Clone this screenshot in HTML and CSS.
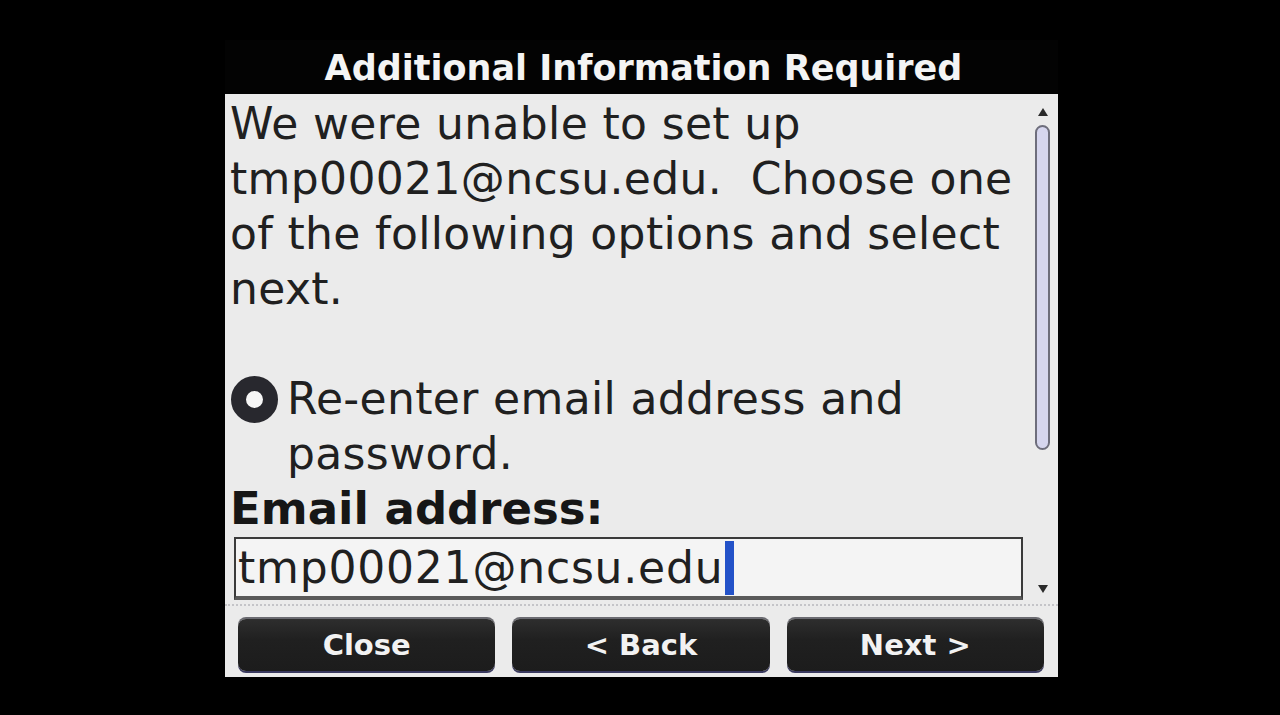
FILE: index.html
```html
<!DOCTYPE html>
<html lang="en">
<head>
  <meta charset="UTF-8">
  <title>Additional Information Required</title>
  <link rel="stylesheet" href="styles.css">
</head>
<body>

  <div class="screen">
    <header class="titlebar">Additional Information Required</header>

    <div class="panel">
      <div class="content">
        <p class="msg">We were unable to set up<br>tmp00021@ncsu.edu.&nbsp; Choose one<br>of the following options and select<br>next.</p>

        <div class="option">
          <span class="radio"></span>
          <span class="option-text">Re-enter email address and<br>password.</span>
        </div>

        <div class="field-label">Email address:</div>
        <div class="field">tmp00021@ncsu.edu<span class="caret"></span></div>
      </div>

      <!-- barra de desplazamiento -->
      <div class="scroll">
        <span class="arrow up"></span>
        <span class="thumb"></span>
        <span class="arrow down"></span>
      </div>
    </div>

    <div class="rule"></div>

    <div class="buttons">
      <button class="btn">Close</button>
      <button class="btn">&lt; Back</button>
      <button class="btn">Next &gt;</button>
    </div>
  </div>

</body>
</html>
```

FILE: styles.css
```css
* {
  margin: 0;
  padding: 0;
  box-sizing: border-box;
}

body {
  background-color: #000;
  font-family: 'DejaVu Sans', 'Liberation Sans', sans-serif;
  height: 715px;
  overflow: hidden;
}

/* Pantalla */
.screen {
  width: 833px;
  margin: 40px 0 0 225px;
  background-color: #ebebeb;
}

.titlebar {
  height: 54px;
  background-color: #030303;
  color: #f4f4f4;
  font-weight: bold;
  font-size: 35px;
  text-align: center;
  line-height: 56px;
  padding-left: 4px;
}

.panel {
  display: flex;
  height: 509px;
}

.content {
  flex: 1;
  padding: 2px 0 0 5px;
  color: #202020;
  font-size: 44px;
  letter-spacing: 0.35px;
  line-height: 55px;
}

.msg {
  margin-bottom: 55px;
}

.option {
  display: flex;
  align-items: flex-start;
}

.radio {
  flex: none;
  width: 47px;
  height: 47px;
  margin: 5px 9px 0 1px;
  border-radius: 50%;
  border: 15px solid #28282e;
  background-color: #f6f6f6;
}

.field-label {
  font-weight: bold;
  font-size: 45px;
  letter-spacing: 0;
  color: #161616;
}

.field {
  margin: 1px 0 0 4px;
  width: 789px;
  height: 63px;
  border: 2px solid #3a3a3a;
  border-bottom: 4px solid #5a5a5a;
  background-color: #f4f4f4;
  letter-spacing: 0.8px;
  line-height: 57px;
  padding-left: 2px;
  display: flex;
  align-items: center;
}

.caret {
  width: 9px;
  height: 54px;
  margin-left: 2px;
  background-color: #2352c8;
}

/* Scroll */
.scroll {
  width: 27px;
  display: flex;
  flex-direction: column;
  align-items: center;
  padding: 14px 4px 0 0;
}

.thumb {
  width: 15px;
  height: 325px;
  margin-top: 9px;
  border: 2px solid #6e6e7c;
  border-radius: 8px;
  background-color: #d6d6ee;
}

.arrow {
  width: 0;
  height: 0;
  border-left: 5px solid transparent;
  border-right: 5px solid transparent;
}

.up {
  border-bottom: 8px solid #2a2a2a;
}

.down {
  margin-top: 135px;
  border-top: 8px solid #2a2a2a;
}

.rule {
  height: 12px;
  border-top: 2px dotted #c4c4c8;
  margin-top: 1px;
}

.buttons {
  display: flex;
  gap: 17px;
  padding: 3px 14px 6px 13px;
}

.btn {
  flex: 1;
  height: 52px;
  border: none;
  border-radius: 8px;
  background: linear-gradient(#2e2e2e, #202020 40%, #1c1c1c);
  box-shadow: 0 -2px 0 #6a6a70, 0 2px 0 #3a3a60;
  color: #f2f2f2;
  font-family: 'DejaVu Sans', 'Liberation Sans', sans-serif;
  font-weight: bold;
  font-size: 29px;
}
```
